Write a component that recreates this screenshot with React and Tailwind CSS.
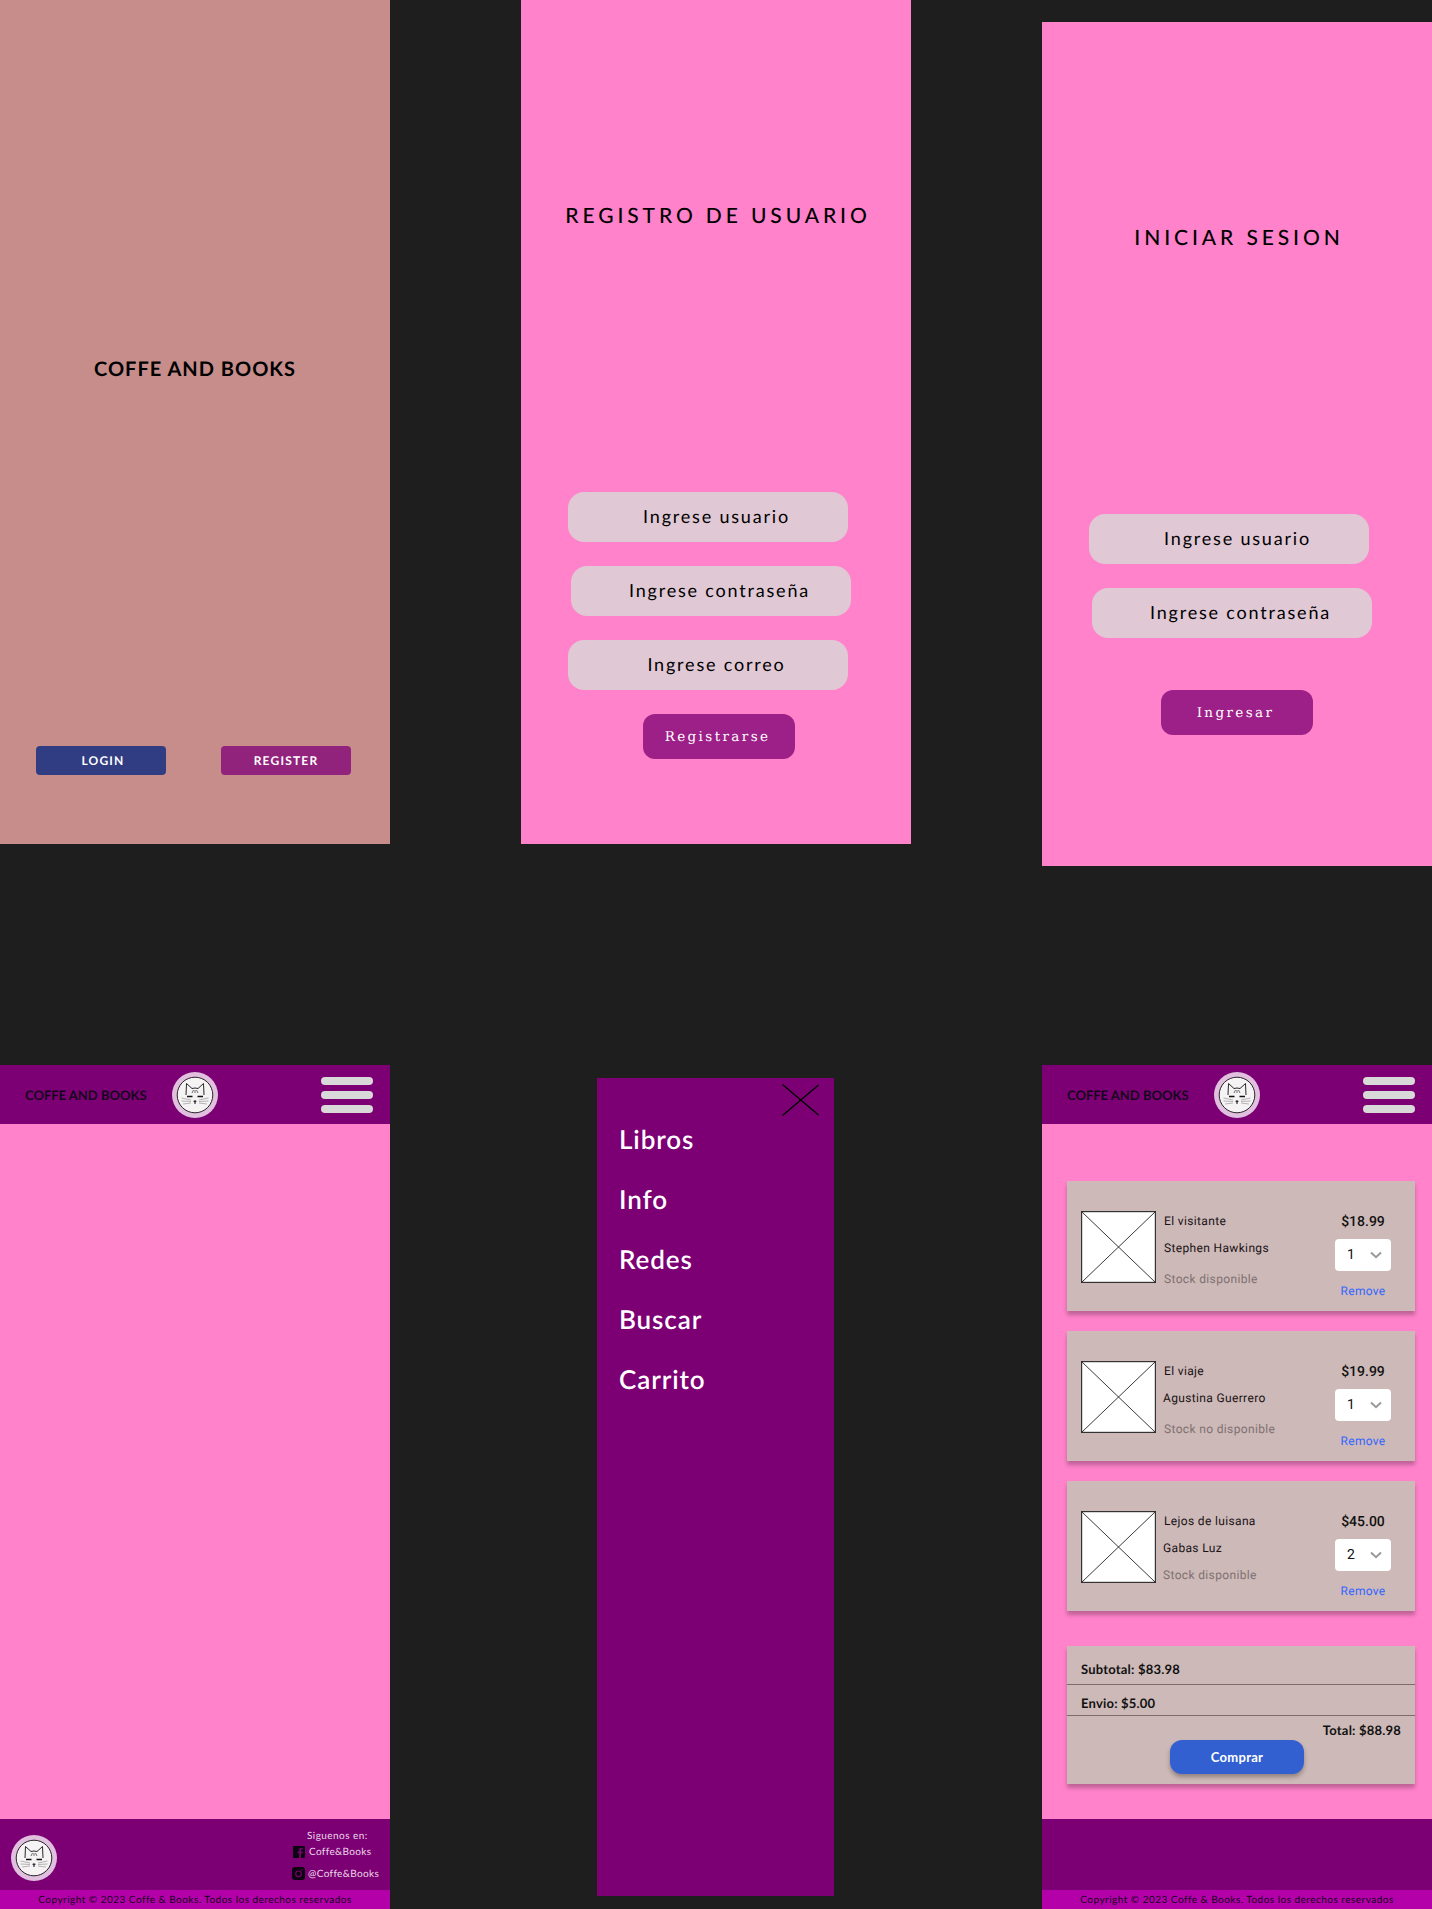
const LATO = { fontFamily: "Lato, sans-serif" };

function Logo() {
  return (
    <svg width="46" height="46" viewBox="0 0 46 46" className="shrink-0">
      <circle cx="23" cy="23" r="23" fill="#e1bfde" />
      <circle cx="23" cy="23" r="17.8" fill="#f5f3f4" stroke="#111" strokeWidth="0.9" />
      <g fill="none" stroke="#111" strokeWidth="0.9">
        <path d="M14 23 L14.5 11.5 L20 16.5 Q23 15.5 26 16.5 L31.5 11.5 L32 23" />
        <path d="M15 24.5 L20.5 24.5 M25.5 24.5 L31 24.5" strokeWidth="1.5" />
        <path d="M21.8 29 L24.2 29 L23 30.5 Z M23 30.5 L23 32" strokeWidth="1" />
        <path d="M20 21 L21.5 18 M26 21 L24.5 18 M23 18 L23 21" strokeWidth="0.6" />
      </g>
      <g fill="none" stroke="#888" strokeWidth="0.6">
        <path d="M9.5 26 L19 28 M9.5 29 L19 29.5 M11 32 L19 31" />
        <path d="M36.5 26 L27 28 M36.5 29 L27 29.5 M35 32 L27 31" />
      </g>
    </svg>
  );
}

function Header() {
  return (
    <header className="flex h-[59px] items-center bg-[#7c0073] pl-[25px] pr-[17px]" style={LATO}>
      <span className="w-[147px] pt-[2px] text-[13px] leading-none font-bold whitespace-nowrap text-[#14051c]">COFFE AND BOOKS</span>
      <Logo />
      <div className="ml-auto flex w-[52px] flex-col gap-1.5">
        <span className="h-2 rounded-full bg-[#d9d9d9]" />
        <span className="h-2 rounded-full bg-[#d9d9d9]" />
        <span className="h-2 rounded-full bg-[#d9d9d9]" />
      </div>
    </header>
  );
}

function Copyright() {
  return (
    <div className="flex h-[19px] items-center justify-center bg-[#b400a9] text-[10px] leading-none tracking-[0.48px] whitespace-nowrap text-[#100018]" style={LATO}>
      Copyright © 2023 Coffe &amp; Books. Todos los derechos reservados
    </div>
  );
}

function FormField({ label, shift }) {
  return (
    <div
      className={`flex h-[50px] w-[280px] items-center justify-center rounded-[16px] bg-[#e0c8d5] pb-[2px] text-[18px] tracking-[1.8px] whitespace-nowrap text-black ${shift ? "ml-[50px]" : "ml-[47px]"}`}
      style={LATO}
    >
      <span className="ml-[17px]">{label}</span>
    </div>
  );
}

function PinkButton({ label, className }) {
  return (
    <div
      className={`flex h-[45px] w-[152px] items-center justify-center rounded-[12px] bg-[#9c2088] pt-[1px] pr-[3px] tracking-[2.4px] text-white ${className}`}
      style={{ fontFamily: '"DejaVu Serif", serif', fontSize: 13.5 }}
    >
      {label}
    </div>
  );
}

function Register() {
  return (
    <section className="flex h-[844px] w-[390px] flex-col bg-[#ff82ca]">
      <h2 className="mt-[201px] mb-[262px] pl-1 text-center text-[21px] leading-[29px] font-medium tracking-[3.9px] text-black" style={LATO}>REGISTRO DE USUARIO</h2>
      <div className="flex flex-col gap-6">
        <FormField label="Ingrese usuario" />
        <FormField label="Ingrese contraseña" shift />
        <FormField label="Ingrese correo" />
      </div>
      <PinkButton label="Registrarse" className="mt-6 ml-[122px]" />
    </section>
  );
}

function Login() {
  return (
    <section className="mt-[22px] flex h-[844px] w-[390px] flex-col bg-[#ff82ca]">
      <h2 className="mt-[201px] mb-[262px] pl-1 text-center text-[21px] leading-[29px] font-medium tracking-[3.9px] text-black" style={LATO}>INICIAR SESION</h2>
      <div className="flex flex-col gap-6">
        <FormField label="Ingrese usuario" />
        <FormField label="Ingrese contraseña" shift />
      </div>
      <PinkButton label="Ingresar" className="mt-[52px] ml-[119px]" />
    </section>
  );
}

function Welcome() {
  return (
    <section className="flex h-[844px] w-[390px] flex-col bg-[#c68d8b]" style={LATO}>
      <h1 className="mt-[356px] text-center text-[20px] leading-[26px] font-bold tracking-[1px] text-black">COFFE AND BOOKS</h1>
      <div className="mt-[364px] flex justify-between pr-[39px] pl-9">
        <div className="flex h-[29px] w-[130px] items-center justify-center rounded bg-[#313d83] pt-[1px] pl-1 text-[12px] font-bold tracking-[1.2px] text-white">LOGIN</div>
        <div className="flex h-[29px] w-[130px] items-center justify-center rounded bg-[#92237d] pt-[1px] text-[12px] font-bold tracking-[1.2px] text-white">REGISTER</div>
      </div>
    </section>
  );
}

function FacebookIcon() {
  return (
    <svg width="12" height="12" viewBox="0 0 12 12" className="shrink-0">
      <rect width="12" height="12" rx="1" fill="#0c0410" />
      <path d="M8 12V7.3h1.5l.3-1.8H8V4.4c0-.6.2-.9.9-.9h.9V1.9c-.4 0-.9-.1-1.3-.1-1.4 0-2.3.8-2.3 2.3v1.4H4.7v1.8h1.5V12z" fill="#7c0073" />
    </svg>
  );
}

function InstagramIcon() {
  return (
    <svg width="13" height="13" viewBox="0 0 13 13" className="shrink-0">
      <rect width="13" height="13" rx="3" fill="#0c0410" />
      <circle cx="6.5" cy="6.8" r="2.8" fill="none" stroke="#7c0073" strokeWidth="1.1" />
      <circle cx="10" cy="3" r="0.8" fill="#7c0073" />
    </svg>
  );
}

function Home() {
  return (
    <section className="flex h-[844px] w-[390px] flex-col bg-[#ff82ca]">
      <Header />
      <div className="flex-1" />
      <footer className="flex h-[71px] bg-[#7c0073] pl-[11px]" style={LATO}>
        <div className="mt-4"><Logo /></div>
        <div className="ml-auto flex w-[98px] flex-col text-[10px] leading-none tracking-[0.35px] whitespace-nowrap text-[#ecd8ea]">
          <span className="mt-[12px] ml-[15px] tracking-[0.45px]">Siguenos en:</span>
          <span className="mt-[5px] ml-[1px] flex items-center gap-[4px]"><FacebookIcon />Coffe&amp;Books</span>
          <span className="mt-[9px] flex items-center gap-[3px]"><InstagramIcon />@Coffe&amp;Books</span>
        </div>
      </footer>
      <Copyright />
    </section>
  );
}

function Menu() {
  const items = ["Libros", "Info", "Redes", "Buscar", "Carrito"];
  return (
    <div className="w-[390px] pt-[13px] pl-[76px]">
      <nav className="relative h-[818px] w-[237px] bg-[#7c0073] pt-[45px] pl-[22px]" style={LATO}>
        <svg width="37" height="32" viewBox="0 0 37 32" className="absolute top-[6px] right-[15px]" fill="none" stroke="#000" strokeWidth="1.4">
          <path d="M0.5 0.5 L36.5 31 M36.5 1 L0.5 31.5" />
        </svg>
        <ul className="flex flex-col gap-[28px]">
          {items.map((t) => (
            <li key={t} className="h-8 text-[26px] leading-8 font-semibold tracking-[0.9px] text-white">{t}</li>
          ))}
        </ul>
      </nav>
    </div>
  );
}

function Placeholder() {
  return (
    <svg width="75" height="72" viewBox="0 0 75 72" className="shrink-0">
      <rect x="0.6" y="0.6" width="73.8" height="70.8" fill="#fff" stroke="#333" strokeWidth="1.2" />
      <path d="M0.5 0.5 L74.5 71.5 M74.5 0.5 L0.5 71.5" stroke="#222" strokeWidth="0.9" />
    </svg>
  );
}

function CartItem({ title, author, stock, price, qty, ax = "ml-0", sx = "ml-0", stockGap = "mt-[17px]" }) {
  return (
    <article className="flex h-[130px] items-start bg-[#cdb9b7] pt-[30px] pl-[14px] shadow-[0_4px_4px_rgba(0,0,0,0.25)]" style={{ fontFamily: "Roboto, sans-serif" }}>
      <Placeholder />
      <div className="ml-2 flex w-[171px] flex-col text-[12px] leading-[14px] tracking-[0.35px] text-[#1a1216]">
        <span className="mt-[3px]">{title}</span>
        <span className={`mt-[13px] ${ax}`}>{author}</span>
        <span className={`${stockGap} text-[#7f7172] ${sx}`}>{stock}</span>
      </div>
      <div className="flex w-[56px] flex-col items-center">
        <span className="mt-[3px] text-[14px] leading-[16px] font-medium text-[#111]">{price}</span>
        <div className="mt-[9px] flex h-8 w-[56px] items-center justify-between rounded bg-white pr-[8px] pl-[12px] text-[14px] text-[#111]">
          <span>{qty}</span>
          <svg width="14" height="8" viewBox="0 0 14 8" fill="none" stroke="#999" strokeWidth="2"><path d="M2 1.5 L7 6.2 L12 1.5" /></svg>
        </div>
        <span className="mt-[13px] text-[12px] leading-[14px] tracking-[0.3px] text-[#3366ff]">Remove</span>
      </div>
    </article>
  );
}

function Cart() {
  return (
    <section className="flex h-[844px] w-[390px] flex-col bg-[#ff82ca]">
      <Header />
      <div className="flex flex-1 flex-col pt-[57px] pr-[17px] pl-[25px]">
        <div className="flex flex-col gap-5">
          <CartItem title="El visitante" author="Stephen Hawkings" stock="Stock disponible" price="$18.99" qty="1" />
          <CartItem title="El viaje" author="Agustina Guerrero" stock="Stock no disponible" price="$19.99" qty="1" ax="ml-[-1px]" />
          <CartItem title="Lejos de luisana" author="Gabas Luz" stock="Stock disponible" price="$45.00" qty="2" ax="ml-[-1px]" sx="ml-[-1px]" stockGap="mt-[13px]" />
        </div>
        <div className="mt-[35px] flex h-[138px] flex-col bg-[#cdb9b7] shadow-[0_4px_4px_rgba(0,0,0,0.25)]" style={LATO}>
          <div className="flex h-[39px] items-end border-b border-[#7d6c6c] pb-[7px] pl-[14px] text-[13px] leading-4 font-bold tracking-[0.2px] text-[#111]">Subtotal: $83.98</div>
          <div className="flex h-[31px] items-end border-b border-[#7d6c6c] pb-[4px] pl-[14px] text-[13px] leading-4 font-bold tracking-[0.2px] text-[#111]">Envio: $5.00</div>
          <div className="mt-[6px] pr-[14px] text-right text-[13px] leading-4 font-bold tracking-[0.2px] text-[#111]">Total: $88.98</div>
          <button className="mt-[2px] ml-[103px] h-[34px] w-[134px] rounded-[12px] bg-[#3260d0] pt-[1px] text-[13px] font-bold tracking-[0.3px] text-white shadow-[0_3px_4px_rgba(0,0,0,0.3)]">Comprar</button>
        </div>
      </div>
      <div className="h-[71px] bg-[#7c0073]" />
      <Copyright />
    </section>
  );
}

export default function App() {
  return (
    <main className="flex h-[1909px] w-[1432px] flex-col bg-[#1e1e1e] antialiased [text-rendering:geometricPrecision]">
      <div className="flex h-[1065px] items-start justify-between">
        <Welcome />
        <Register />
        <Login />
      </div>
      <div className="flex flex-1 items-start justify-between">
        <Home />
        <Menu />
        <Cart />
      </div>
    </main>
  );
}
